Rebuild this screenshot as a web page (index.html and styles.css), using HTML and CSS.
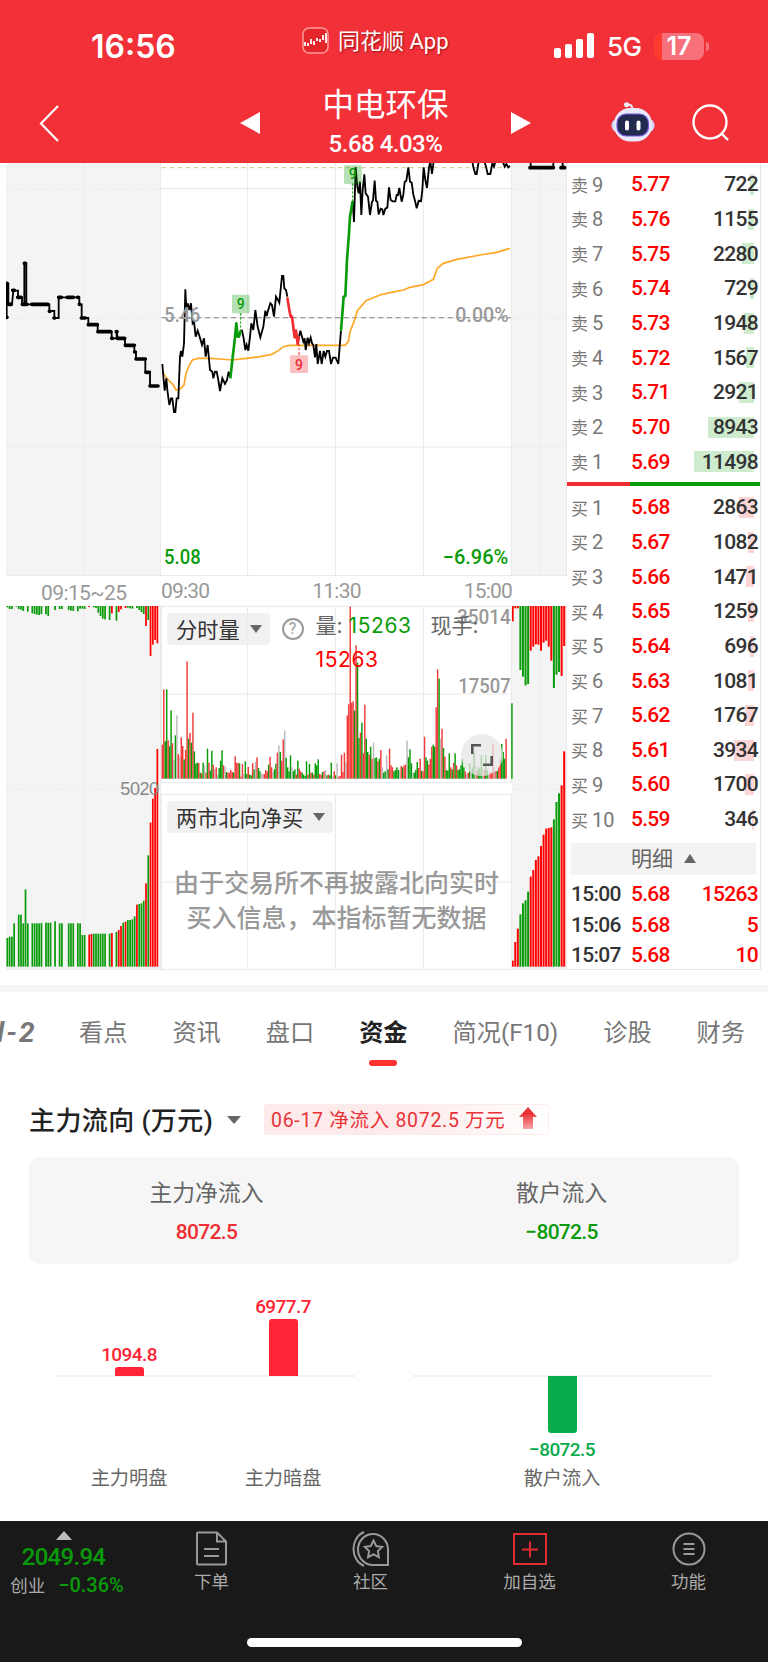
FILE: index.html
```
<!DOCTYPE html>
<html lang="zh-CN">
<head>
    <meta charset="UTF-8">
    <meta name="viewport" content="width=device-width, initial-scale=1.0">
    <title>中电环保</title>
    <link rel="stylesheet" href="styles.css">
</head>
<body>
    <header>
        <div class="status">
            <div class="clock">16:56</div>
            <div class="app">
                <svg width="27" height="27" viewBox="0 0 27 27">
                    <rect x="1" y="1" width="25" height="25" rx="6" fill="#e3262c" stroke="#f99" stroke-width="1.5"/>
                    <path d="M3 15v4M6 16v3M9 12v5M12 14v4M15 11v3M18 12v3M21 8v5M24 6v10" stroke="#fff" stroke-width="1.8"/>
                </svg>
                <span>同花顺 App</span>
            </div>
            <div class="signal">
                <svg width="40" height="26" viewBox="0 0 40 26" fill="#fff">
                    <rect x="0" y="15" width="7" height="10" rx="2"/>
                    <rect x="11" y="11" width="7" height="14" rx="2"/>
                    <rect x="22" y="6" width="7" height="19" rx="2"/>
                    <rect x="33" y="0" width="7" height="25" rx="2"/>
                </svg>
                <span class="net">5G</span>
                <span class="battery">17</span>
                <i class="battery-tip"></i>
            </div>
        </div>
        <nav class="navbar">
            <svg class="back" width="20" height="37" viewBox="0 0 20 37"><path d="M19 1L2 18.500L19 36" fill="none" stroke="#fff" stroke-width="2.200"/></svg>
            <svg class="prev" width="20" height="24" viewBox="0 0 20 24"><path d="M20 1v22L0 12z" fill="#fff"/></svg>
            <div class="stock">
                <h1>中电环保</h1>
                <p>5.68 4.03%</p>
            </div>
            <svg class="next" width="20" height="24" viewBox="0 0 20 24"><path d="M0 1v22l20-11z" fill="#fff"/></svg>
            <svg class="robot" width="44" height="40" viewBox="0 0 44 40">
                <path d="M21.500 7c0-3.500-1.500-4.500-5-4.500" fill="none" stroke="#e9e6fb" stroke-width="1.800"/>
                <circle cx="15.500" cy="2.800" r="2.500" fill="#f4f2ff"/>
                <rect x=".5" y="17" width="43" height="13" rx="6" fill="#d2d4f7"/>
                <rect x="3" y="6" width="38" height="33.500" rx="16" fill="#e9e9fb"/>
                <rect x="6" y="12" width="31.500" height="22" rx="9" fill="#222b4d" stroke="#7a5be8" stroke-width="1.200"/>
                <path d="M16 20.500v6M27.500 20.500v6" stroke="#fff" stroke-width="4" stroke-linecap="round"/>
            </svg>
            <svg class="search" width="38" height="38" viewBox="0 0 38 38" fill="none" stroke="#fff" stroke-width="2.400"><circle cx="18" cy="18" r="16.500"/><path d="M29 29l7 7"/></svg>
        </nav>
    </header>

    <main>
        <section class="market">
            <div class="chart">
                <!-- call auction -->
                <div class="column">
                    <svg class="price" viewBox="18 9 465 1239">
                        <rect class="shade" x="18" y="9" width="465" height="1239"/>
                        <path class="dots" d="M252 9V1248M18 88H480M18 474H480M18 861H480"/>
                        <path class="grid" d="M482 9V1248M18 1246H482"/>
                        <path class="line" d="M20 472V370H25V433H36L40 392H54V412H66V433H73V310H79V433H148V453H163V474H176V412H238V433H245V474H265V494H293V515H335V535H350V515L353 535H375V555H403V576H408V597H436V637H450V678H475"/>
                        <path class="ticks" d="M20 472h1M20 370h1M26 433h8M38 391h5M53 412h10M67 433h14M73 310h3M95 433h49M148 454h2M162 474h2M176 412h8M202 412h18M233 412h2M238 433h1M244 474h12M265 494h27M294 515h38M335 535h2M349 515h2M352 535h22M376 556h27M404 576h2M408 597h28M438 637h10M450 678h24"/>
                    </svg>
                    <div class="time pre">09:15~25</div>
                    <svg class="auction" viewBox="18 198 465 1092">
                        <rect class="shade" x="18" y="198" width="465" height="1092"/>
                        <path class="dots" d="M252 198V1288M18 747H480"/>
                        <path class="grid" d="M482 198V1290M18 1288H482"/>
                        <g id="preTop"></g>
                        <g id="preBottom"></g>
                        <text class="small" x="361" y="766" textLength="116">5020</text>
                    </svg>
                </div>

                <!-- continuous trading -->
                <div class="column">
                    <svg class="price" viewBox="483 9 1053 1239">
                        <path class="grid" d="M743 9V1248M1006 9V1248M1270 9V1248M1534 9V1248M483 86H1536M483 474H1536M483 861H1536M483 1247H1536"/>
                        <path d="M485 23H1533" fill="none" stroke="#e3c9a0" stroke-width="4" stroke-dasharray="12 12"/>
                        <path d="M485 473H1533" fill="none" stroke="#999" stroke-width="4" stroke-dasharray="15 11"/>
                        <path d="M487 635L500 655L520 675L528 690L540 688L552 675L558 640L568 615L577 600L595 595L630 595L660 597L695 600L740 595L780 590L815 583L835 572L850 560L870 556L1035 556L1045 545L1050 515L1062 485L1072 452L1098 422L1140 405L1170 398L1210 390L1230 382L1270 374L1300 358L1312 325L1330 310L1370 298L1440 285L1490 277L1530 265" fill="none" stroke="#ffa726" stroke-width="5"/>
                        <path class="line" d="M487 612L490 650L494 692L499 655L502 690L508 735L513 715H517L522 756H526L530 715H535L540 590L543 573L547 590L552 550L556 388L559 450L563 430L568 450L573 430L578 490L582 485L587 530L593 512L599 530L606 555L612 535L617 590L623 555L630 630L637 635L640 655L645 635H650L655 660L660 693L667 655L675 672L681 660L686 635L691 652"/>
                        <path class="line" d="M722 512H726L731 535L736 570L740 555L745 572L750 530L754 490L760 510L766 450L773 500L781 532L790 500L796 452L800 468L804 452L811 430L816 435L822 470L828 410L834 420L838 428L846 348H850L853 385L858 390L862 410"/>
                        <path class="line" d="M897 530L901 512L906 530L910 545L914 535L917 570L923 533L927 550L932 533L936 550L940 555L945 592L949 552L953 612L960 573L965 612L971 573L976 590L981 573H987L993 612L999 593H1007L1015 612L1019 560L1023 512"/>
                        <path class="line" d="M1058 124L1062 186L1067 22L1072 80L1076 100L1080 65L1084 165L1088 90L1093 43L1097 100L1104 110L1110 165L1116 125L1119 122L1124 62L1128 122L1132 125L1136 163L1142 146L1147 148L1150 165L1156 146L1162 143L1167 82L1172 120L1178 124H1186L1190 105H1194L1198 84L1205 125L1210 104L1214 66L1219 62L1225 22L1230 65L1235 68L1240 104L1245 122L1250 145L1256 122L1263 124L1267 90L1271 22L1276 60L1281 84L1287 22L1291 4L1296 42L1301 4M1417 4L1420 22L1426 42H1430L1436 4M1453 4L1458 20L1463 42H1471L1477 10L1482 20L1486 4M1508 4L1514 20L1519 12L1525 22L1530 18"/>
                        <path class="run green" d="M691 655L697 600L703 550L709 490L713 530H717L722 512"/>
                        <path class="run red" d="M862 412L868 450L872 470H876L881 510L884 532L888 512L893 552L897 530"/>
                        <path class="run green" d="M1023 512L1031 410L1036 408L1041 300L1047 220L1050 170L1058 124"/>
                        <path d="M722 460V512M1058 70V124" stroke="#0a9b0a" stroke-width="3" stroke-dasharray="7 5"/>
                        <path d="M897 552V588" stroke="#f02d32" stroke-width="3" stroke-dasharray="7 5"/>
                        <path class="flag-green" d="M700 404h45a4 4 0 0 1 4 4v48a4 4 0 0 1-4 4h-18l-5 8l-5-8h-17a4 4 0 0 1-4-4v-48a4 4 0 0 1 4-4z"/>
                        <path class="flag-green" d="M1036 16h45a4 4 0 0 1 4 4v48a4 4 0 0 1-4 4h-18l-5 8l-5-8h-17a4 4 0 0 1-4-4v-48a4 4 0 0 1 4-4z"/>
                        <path class="flag-red" d="M874 586h18l5-8l5 8h18a4 4 0 0 1 4 4v45a4 4 0 0 1-4 4h-46a4 4 0 0 1-4-4v-45a4 4 0 0 1 4-4z"/>
                        <text class="nine up" x="722" y="446">9</text>
                        <text class="nine up" x="1058" y="58">9</text>
                        <text class="nine down" x="897" y="629">9</text>
                        <text class="scale" x="493" y="485" textLength="108" lengthAdjust="spacingAndGlyphs">5.46</text>
                        <text class="scale" x="1366" y="485" textLength="160" lengthAdjust="spacingAndGlyphs">0.00%</text>
                        <text class="scale low" x="492" y="1211" textLength="110" lengthAdjust="spacingAndGlyphs">5.08</text>
                        <text class="scale low" x="1328" y="1211" textLength="197" lengthAdjust="spacingAndGlyphs">−6.96%</text>
                    </svg>
                    <div class="time"><span>09:30</span><span>11:30</span><span>15:00</span></div>
                    <div class="volume">
                        <svg viewBox="483 198 1053 531">
                            <path class="grid" d="M484 198V729M743 198V729M1006 198V729M1270 198V729M1534 198V729M483 199H1536M483 462H1536M483 727H1536"/>
                            <g id="volume"></g>
                            <text class="scale" x="1371" y="251" textLength="161" lengthAdjust="spacingAndGlyphs">35014</text>
                            <text class="scale" x="1375" y="458" textLength="157" lengthAdjust="spacingAndGlyphs">17507</text>
                        </svg>
                        <div class="legend">
                            <span class="picker">分时量<i class="caret"></i></span>
                            <span class="help">?</span>
                            <p>
                                <span class="qty">量: <b class="green">15263</b></span><span>现手:</span><br>
                                <b class="red">15263</b>
                            </p>
                        </div>
                        <span class="expand">
                            <svg width="22" height="22" viewBox="0 0 22 22" fill="none" stroke="#555" stroke-width="2.600"><path d="M1.300 10V1.300H10M20.700 12v8.700H12"/></svg>
                        </span>
                    </div>
                    <div class="north">
                        <svg viewBox="483 0 1053 528">
                            <path class="grid" d="M484 0V528M743 0V528M1006 0V528M1270 0V528M1534 0V528M483 2H1536M483 264H1536M483 526H1536"/>
                        </svg>
                        <span class="picker">两市北向净买<i class="caret"></i></span>
                        <p>由于交易所不再披露北向实时<br>买入信息，本指标暂无数据</p>
                    </div>
                </div>

                <!-- after hours -->
                <div class="column">
                    <svg class="price" viewBox="1536 9 165 1239">
                        <rect class="shade" x="1536" y="9" width="165" height="1239"/>
                        <path class="dots" d="M1620 9V1248M1536 88H1698M1536 474H1698M1536 861H1698"/>
                        <path class="grid" d="M1699 9V1248M1536 1246H1700"/>
                        <path class="line" d="M1592 0V22H1660V0M1682 22H1696M1688 0V22"/>
                        <path class="ticks" d="M1590 23H1660M1683 23H1694"/>
                    </svg>
                    <div class="time"></div>
                    <svg class="auction" viewBox="1536 198 165 1092">
                        <rect class="shade" x="1536" y="198" width="165" height="1092"/>
                        <path class="dots" d="M1620 198V1288M1536 747H1698"/>
                        <path class="grid" d="M1699 198V1290M1536 1288H1700"/>
                        <g id="postTop"></g>
                        <g id="postBottom"></g>
                    </svg>
                </div>
            </div>

            <div class="book">
                <div id="sells"></div>
                <div class="ratio"></div>
                <div id="buys"></div>
                <div class="detail">明细 <i class="caret up"></i></div>
                <div class="deal"><span>15:00</span><b>5.68</b><b>15263</b></div>
                <div class="deal"><span>15:06</span><b>5.68</b><b>5</b></div>
                <div class="deal"><span>15:07</span><b>5.68</b><b>10</b></div>
            </div>
        </section>

        <ul class="tabs">
            <li class="level">l-2</li>
            <li>看点</li>
            <li>资讯</li>
            <li>盘口</li>
            <li class="active">资金</li>
            <li>简况(F10)</li>
            <li>诊股</li>
            <li>财务</li>
        </ul>

        <section class="flow">
            <div class="flow-head">
                <h2>主力流向 (万元)</h2>
                <i class="caret"></i>
                <div class="badge">
                    <span>06-17 净流入 8072.5 万元</span>
                    <svg width="18" height="23" viewBox="0 0 18 23">
                        <linearGradient id="fade" x1="0" y1="0" x2="0" y2="1"><stop offset="0.300" stop-color="#ea3338"/><stop offset="1" stop-color="#f7a8a8"/></linearGradient>
                        <path d="M9 0l9 10h-4v12H4V10H0z" fill="url(#fade)"/>
                    </svg>
                </div>
            </div>
            <div class="summary">
                <div><h3>主力净流入</h3><p class="red">8072.5</p></div>
                <div><h3>散户流入</h3><p class="green">−8072.5</p></div>
            </div>
            <div class="bars">
                <div class="group">
                    <div class="bar"><div class="above"><b>1094.8</b><i style="height: 9px"></i></div><div class="below"></div><span>主力明盘</span></div>
                    <div class="bar"><div class="above"><b>6977.7</b><i style="height: 57px"></i></div><div class="below"></div><span>主力暗盘</span></div>
                </div>
                <div class="group">
                    <div class="bar"><div class="above"></div><div class="below"><i style="height: 57px"></i><b>−8072.5</b></div><span>散户流入</span></div>
                </div>
            </div>
        </section>
    </main>

    <footer>
        <div class="menu">
            <div class="index">
                <i class="caret up"></i>
                <strong>2049.94</strong>
                <p>创业<b>−0.36%</b></p>
            </div>
            <div class="item">
                <svg width="34" height="36" viewBox="0 0 34 36"><path d="M2 2.500a1 1 0 0 1 1-1h19l9 9v22a1 1 0 0 1-1 1H3a1 1 0 0 1-1-1zM22 1.500v9h9M9 18h15M9 25h15"/></svg>
                <span>下单</span>
            </div>
            <div class="item">
                <svg width="37" height="36" viewBox="0 0 37 36"><path d="M36 34H21.500A15 15.500 0 1 1 36 18.500zM12 1C-2 7-2 29 12 35M21.500 9.500l2.700 5.500l6 .9l-4.300 4.200l1 6l-5.400-2.800l-5.400 2.800l1-6l-4.300-4.200l6-.9z"/></svg>
                <span>社区</span>
            </div>
            <div class="item">
                <svg class="add" width="36" height="36" viewBox="0 0 36 36"><path d="M2 3h32v30H2zM18 10.500v16M10 18.500h16"/></svg>
                <span>加自选</span>
            </div>
            <div class="item">
                <svg width="34" height="36" viewBox="0 0 34 36"><circle cx="17" cy="18" r="15.500"/><path d="M11.500 13h11M11.500 18h11M11.500 23h11"/></svg>
                <span>功能</span>
            </div>
        </div>
        <div class="home"></div>
    </footer>
    <script src="script.js"></script>
</body>
</html>
```
FILE: styles.css
```
* {
    margin: 0;
    padding: 0;
    box-sizing: border-box;
}

body {
    width: 768px;
    height: 1662px;
    overflow: hidden;
    background: #fff;
    color: #333;
    font-family: Roboto, "Noto Sans CJK SC", sans-serif;
}

svg {
    display: block;
    flex: none;
}

li {
    list-style: none;
}

b, i, h1, h2, h3 {
    font-weight: 400;
    font-style: normal;
}

.red {
    color: #f02d32;
}

.green {
    color: #0a9b0a;
}

.caret {
    display: inline-block;
    border: 6px solid transparent;
    border-top: 8px solid #666;
    border-bottom: 0;
}

.caret.up {
    border-top: 0;
    border-bottom: 9px solid #666;
}

/* header */
header {
    height: 163px;
    background: #f23038;
    color: #fff;
}

.status {
    display: flex;
    height: 86px;
    padding: 0 59px 0 91px;
}

.clock {
    width: 211px;
    padding-top: 28px;
    font: 600 32px/38px Inter, sans-serif;
}

.app {
    display: flex;
    width: 252px;
    padding-top: 27px;
    gap: 9px;
    font-size: 22px;
    line-height: 29px;
    text-shadow: 1px 1px 2px rgba(90, 0, 0, 0.6);
}

.signal {
    display: flex;
    padding-top: 33px;
    font-family: Inter, sans-serif;
}

.net {
    width: 60px;
    padding-left: 13px;
    font-size: 26px;
    line-height: 28px;
    letter-spacing: -0.5px;
    font-weight: 500;
}

.battery {
    width: 50px;
    height: 27px;
    border-radius: 8px;
    background: linear-gradient(90deg, #ff3b30 8px, #f7707a 8px);
    font-size: 25px;
    line-height: 27px;
    font-weight: 600;
    text-align: center;
}

.battery-tip {
    width: 3px;
    height: 9px;
    margin: 9px 0 0 2px;
    border-radius: 0 3px 3px 0;
    background: #f7707a;
}

.navbar {
    display: flex;
    height: 77px;
    padding-left: 39px;
}

.back {
    margin-top: 19px;
}

.prev {
    margin: 25px 0 0 181px;
}

.next {
    margin-top: 25px;
}

.stock {
    width: 251px;
    padding-top: 1px;
    text-align: center;
}

.stock h1 {
    font-size: 31.5px;
    line-height: 38px;
}

.stock p {
    font-size: 24px;
    line-height: 38px;
    letter-spacing: -0.5px;
    font-weight: 500;
}

.robot {
    margin: 16px 0 0 80px;
}

.search {
    margin: 18px 0 0 37px;
}

/* chart */
.market {
    display: flex;
    height: 829px;
    padding-left: 6px;
    border-bottom: 7px solid #f5f5f5;
}

.chart {
    display: flex;
}

.column {
    display: flex;
    flex-direction: column;
}

.price {
    height: 413px;
}

.auction {
    height: 364px;
}

.time {
    display: flex;
    justify-content: space-between;
    height: 30px;
    font-size: 21px;
    line-height: 30px;
    letter-spacing: -0.8px;
    color: #999;
}

.time.pre {
    padding: 2px 0 0 35px;
    letter-spacing: -0.6px;
}

.shade {
    fill: #f4f4f4;
}

.grid {
    fill: none;
    stroke: #e8e8e8;
    stroke-width: 3;
}

.dots {
    fill: none;
    stroke: #e8e8e8;
    stroke-width: 3;
    stroke-dasharray: 5 5;
}

.line {
    fill: none;
    stroke: #000;
    stroke-width: 5.500;
}

.ticks {
    fill: none;
    stroke: #000;
    stroke-width: 11;
    stroke-linecap: round;
}

.run {
    fill: none;
    stroke-width: 8;
    stroke-linejoin: round;
}

.run.green {
    stroke: #0a9b0a;
}

.run.red {
    stroke: #f02d32;
}

.flag-green {
    fill: rgba(10, 155, 10, 0.3);
}

.flag-red {
    fill: rgba(240, 45, 50, 0.3);
}

.nine {
    font-size: 42px;
    font-weight: 500;
    text-anchor: middle;
}

.nine.up {
    fill: #0a9b0a;
}

.nine.down {
    fill: #f02d32;
}

.scale {
    font-size: 62px;
    font-weight: 500;
    fill: #999;
}

.scale.low {
    fill: #0a9b0a;
}

.small {
    font: 54px "Liberation Sans", sans-serif;
    fill: #888;
}

.volume {
    position: relative;
    width: 351px;
    height: 187px;
}

.volume > svg {
    overflow: visible;
}

.legend {
    position: absolute;
    top: 7px;
    left: 6px;
    display: flex;
}

.picker {
    display: flex;
    align-items: center;
    gap: 10px;
    height: 32px;
    padding: 0 8px 1px 9px;
    border-radius: 4px;
    background: rgba(235, 235, 235, 0.7);
    font-size: 21.200px;
}

.help {
    width: 22px;
    height: 22px;
    margin: 5px 12px 0 12px;
    border: 2px solid #999;
    border-radius: 50%;
    color: #999;
    font-size: 16px;
    line-height: 18px;
    text-align: center;
}

.legend p {
    margin-top: -4px;
    font: 21px/34px Inter, "Noto Sans CJK SC", sans-serif;
    color: #666;
    white-space: nowrap;
}

.legend .qty {
    display: inline-block;
    width: 115px;
}

.legend b {
    letter-spacing: 0.6px;
}

.legend .red {
    color: #f00;
}

.expand {
    position: absolute;
    top: 128px;
    left: 300px;
    display: flex;
    align-items: center;
    justify-content: center;
    width: 42px;
    height: 42px;
    border-radius: 50%;
    background: rgba(230, 230, 230, 0.75);
}

.north {
    position: relative;
    width: 351px;
    height: 177px;
}

.north > svg {
    margin-top: 1px;
}

.north .picker {
    position: absolute;
    top: 8px;
    left: 6px;
}

.north p {
    position: absolute;
    top: 73px;
    left: 0;
    width: 351px;
    font-size: 25px;
    line-height: 35px;
    font-weight: 500;
    color: #999;
    text-align: center;
}

/* order book */
.book {
    width: 194px;
    height: 807px;
    padding-top: 4px;
    border-right: 1px solid #e8e8e8;
    border-bottom: 1px solid #e8e8e8;
    font-size: 21px;
    font-weight: 500;
    letter-spacing: -0.7px;
}

.row {
    position: relative;
    display: grid;
    grid-template-columns: 60px 60px 67px;
    align-items: center;
    height: 34.670px;
    padding-left: 4px;
}

.row .name {
    font-size: 17px;
    font-weight: 400;
    letter-spacing: 0;
    color: #777;
}

.row .name em {
    margin-left: 4px;
    font-size: 20px;
    font-style: normal;
}

.row b, .deal b {
    font-weight: 500;
    color: #f00;
}

.row .num {
    position: relative;
    text-align: right;
}

.row i {
    position: absolute;
    top: 7px;
    right: 6px;
    height: 21px;
    background: rgba(10, 155, 10, 0.2);
}

#buys .row i {
    background: rgba(240, 45, 50, 0.2);
}

.ratio {
    height: 4px;
    margin: 3px 0 4px;
    background: linear-gradient(90deg, #f02d32 32.500%, #0a9b0a 32.500%);
}

.detail {
    height: 32px;
    margin: 7px 4px 4px;
    background: #f3f3f3;
    font-weight: 400;
    line-height: 32px;
    text-align: center;
    letter-spacing: 0;
    color: #666;
}

.detail .caret {
    margin: 0 0 3px 6px;
}

.deal {
    display: grid;
    grid-template-columns: 60px 60px 67px;
    padding-left: 4px;
    line-height: 30.500px;
}

.deal :last-child {
    text-align: right;
}

/* tabs */
.tabs {
    display: flex;
    height: 82px;
    gap: 45px;
    padding-top: 21px;
    font-size: 24.200px;
    line-height: 40px;
    color: #777;
    white-space: nowrap;
}

.tabs .level {
    width: 36px;
    margin-right: -2px;
    font-size: 28px;
    font-weight: 700;
    font-style: italic;
    text-indent: -3px;
    letter-spacing: 2px;
}

.tabs .active {
    color: #222;
    font-weight: 600;
}

.tabs .active::after {
    content: "";
    display: block;
    width: 28px;
    height: 6px;
    margin: 7px auto 0;
    border-radius: 3px;
    background: #fd3130;
}

/* capital flow */
.flow {
    padding: 30px 29px 0;
}

.flow-head {
    display: flex;
    align-items: center;
    height: 31px;
}

.flow-head h2 {
    width: 198px;
    padding-bottom: 2px;
    font-size: 26px;
    font-weight: 500;
    letter-spacing: 0.4px;
    color: #222;
    white-space: nowrap;
}

.flow-head .caret {
    border-width: 8px 7px 0;
}

.badge {
    display: flex;
    align-items: center;
    justify-content: space-between;
    width: 285px;
    height: 31px;
    margin-left: 23px;
    padding: 0 11px 2px 6px;
    border: 1px solid #fdeaea;
    border-radius: 3px;
    background: linear-gradient(90deg, #fdeaea 50%, #fff);
    font-size: 19.500px;
    letter-spacing: 0.7px;
    color: #e93338;
    white-space: nowrap;
}

.summary {
    display: grid;
    grid-template-columns: 1fr 1fr;
    height: 107px;
    margin-top: 22px;
    padding-top: 17px;
    border-radius: 10px;
    background: #f6f6f6;
    text-align: center;
}

.summary h3 {
    font-size: 22.800px;
    line-height: 40px;
    color: #666;
}

.summary p {
    font-size: 21px;
    line-height: 36px;
    font-weight: 500;
    letter-spacing: -0.7px;
}

.bars {
    display: grid;
    grid-template-columns: 298px 298px;
    gap: 58px;
    height: 257px;
    padding: 0 28px;
}

.group {
    display: flex;
    justify-content: center;
    background: linear-gradient(#f2f2f2, #f2f2f2) 0 111px / 100% 2px no-repeat;
}

.group:first-child .bar {
    width: 154px;
    flex: none;
}

.bar {
    text-align: center;
    font-size: 19.200px;
    line-height: 28px;
    color: #666;
}

.bar b {
    display: block;
    font-size: 19px;
    line-height: 24px;
    font-weight: 500;
    letter-spacing: -0.6px;
    color: #ff2436;
}

.bar i {
    display: block;
    width: 29px;
    margin: 0 auto;
    border-radius: 3px 3px 0 0;
    background: #ff2436;
}

.above {
    display: flex;
    flex-direction: column;
    justify-content: flex-end;
    height: 112px;
}

.below {
    height: 89px;
}

.below i {
    border-radius: 0 0 3px 3px;
    background: #0aab4b;
}

.below b {
    margin-top: 5px;
    color: #0aab4b;
}

/* bottom bar */
footer {
    height: 141px;
    background: #191919;
    color: #aaa;
}

.menu {
    display: flex;
    height: 117px;
    padding-top: 10px;
}

.index {
    width: 132px;
    padding-right: 5px;
    text-align: center;
    line-height: 27px;
}

.index .caret {
    display: block;
    width: 16px;
    margin: 0 auto 4px;
    border-width: 0 8px 9px;
    border-bottom-color: #bbb;
}

.index strong {
    display: block;
    font-size: 24px;
    font-weight: 500;
    letter-spacing: -0.7px;
    color: #0a9b0a;
}

.index p {
    margin-left: 7px;
    font-size: 17.500px;
    line-height: 29px;
    white-space: nowrap;
}

.index b {
    margin-left: 13px;
    font-size: 20px;
    font-weight: 500;
    color: #0a9b0a;
}

.item {
    display: flex;
    flex-direction: column;
    align-items: center;
    width: 159px;
    font-size: 17.500px;
    line-height: 31px;
}

.item svg {
    fill: none;
    stroke: #999;
    stroke-width: 2;
}

.item .add {
    stroke: #e02b30;
}

.home {
    width: 275px;
    height: 9px;
    margin: 0 auto;
    border-radius: 5px;
    background: #fff;
}
```
FILE: script.js
```
var colors = { r: '#f00', g: '#0a9b0a', a: '#bbb' };

// each entry is a colour letter and a bar length, "." is an empty slot
function drawBars(id, data, x, step, width, base, hang) {
    var html = '';
    data.split(' ').forEach(function (item, i) {
        if (item == '.') return;
        var h = Number(item.slice(1));
        html += '<rect x="' + (x + step * i - width / 2) + '" y="' + (hang ? base : base - h) +
            '" width="' + width + '" height="' + h + '" fill="' + colors[item[0]] + '"/>';
    });
    document.getElementById(id).innerHTML = html;
}

drawBars('preTop', 'g4 g9 g9 . g2 g9 g11 g15 . g17 . g22 g24 g26 g27 g24 . g25 g30 . . g12 . g9 g9 . . g12 g14 g15 . g16 g8 g8 g9 . r3 . g4 g6 g20 g30 g38 g40 . g42 r22 . g44 r18 r10 . r6 g5 g7 g8 . g6 g12 g18 g24 r60 g42 r150 r116 r102 r112', 22, 6.82, 5.2, 198, true);
drawBars('preBottom', 'g86 g90 g90 g130 . g156 g156 g130 g232 g130 . g130 g130 g130 g130 g131 . g132 g132 g132 . g136 . g130 g130 . . g130 g130 g130 . g130 g130 g95 g95 . r96 r98 g99 g99 g99 g99 g99 g99 . g99 r101 . g104 r110 r122 g132 r135 g140 g140 g142 g151 r186 g188 g190 g198 r250 g334 r432 r504 r536 r653', 22, 6.82, 5.2, 1280, false);
drawBars('postTop', 'r46 r7 r7 g192 g212 g238 g234 r134 r122 r115 r116 r134 r110 r104 r122 r164 g246 g206 g198 r210 r120', 1538, 7.73, 6, 198, true);
drawBars('postBottom', 'r18 r74 r114 g157 g190 g199 g225 r270 r290 r320 r331 r362 r396 r414 r416 r418 g442 g494 g520 r544 r646', 1538, 7.73, 6, 1280, false);

colors.r = '#f23c3c';
drawBars('volume', 'r102 r268 g112 g268 r115 g97 g205 r106 a56 g130 a190 r74 a66 r124 r98 g58 r86 r352 g120 r137 g108 r198 g82 g45 g48 r47 g18 r16 g48 a40 r18 g90 r48 g24 g84 r42 a28 r34 a12 g32 g54 g85 r40 a36 g20 r18 r18 r26 r20 g18 r67 r48 r47 g46 r6 r44 a14 g52 g14 r35 g12 g10 r46 g28 a50 r64 g32 g22 a15 a14 r14 r26 r22 g42 r66 r34 a20 g28 g45 r78 a100 g80 r54 r118 a145 g63 g34 g22 ' +
    'g70 a34 g22 g28 r12 g54 r30 r22 g18 g12 g8 g52 r12 g44 r18 g18 r12 g46 g40 g58 r14 r12 g20 r22 a26 g10 r12 g10 g48 a6 r22 g10 a46 r6 r8 r72 r20 r78 a50 r190 r223 r516 r228 r232 g204 r400 g348 g122 r138 g168 r76 r222 g120 g80 r72 g96 r60 a108 g62 g64 r52 g60 r86 a34 g18 g22 a70 g28 r90 r40 r34 g22 g26 g34 g26 a26 r38 g34 r40 r42 a114 g64 g88 g46 a18 g18 g26 g50 r32 r60 g24 r22 r126 g64 g54 r42 r60 r96 g102 g96 r214 r328 g300 a120 r150 g92 r66 g26 g24 g76 r34 g28 r48 g76 r40 g26 g28 g40 g60 g34 r22 a14 r18 g46 a34 g34 g78 a42 r24 g34 g30 g70 a34 r26 g72 g26 a14 r20 r18 r104 a34 r22 g24 r36 r60 g104 g80 g60 r120 . . . g226', 487, 4.37, 4.4, 716, false);

function drawRows(id, label, rows) {
    document.getElementById(id).innerHTML = rows.map(function (row) {
        return '<div class="row"><i style="width: ' + (row[2] * 0.0052).toFixed(1) + 'px"></i>' +
            '<span class="name">' + label + '<em>' + row[0] + '</em></span>' +
            '<b>' + row[1] + '</b><span class="num">' + row[2] + '</span></div>';
    }).join('');
}

drawRows('sells', '卖', [
    [9, '5.77', 722],
    [8, '5.76', 1155],
    [7, '5.75', 2280],
    [6, '5.74', 729],
    [5, '5.73', 1948],
    [4, '5.72', 1567],
    [3, '5.71', 2921],
    [2, '5.70', 8943],
    [1, '5.69', 11498]
]);
drawRows('buys', '买', [
    [1, '5.68', 2863],
    [2, '5.67', 1082],
    [3, '5.66', 1471],
    [4, '5.65', 1259],
    [5, '5.64', 696],
    [6, '5.63', 1081],
    [7, '5.62', 1767],
    [8, '5.61', 3934],
    [9, '5.60', 1700],
    [10, '5.59', 346]
]);
```
